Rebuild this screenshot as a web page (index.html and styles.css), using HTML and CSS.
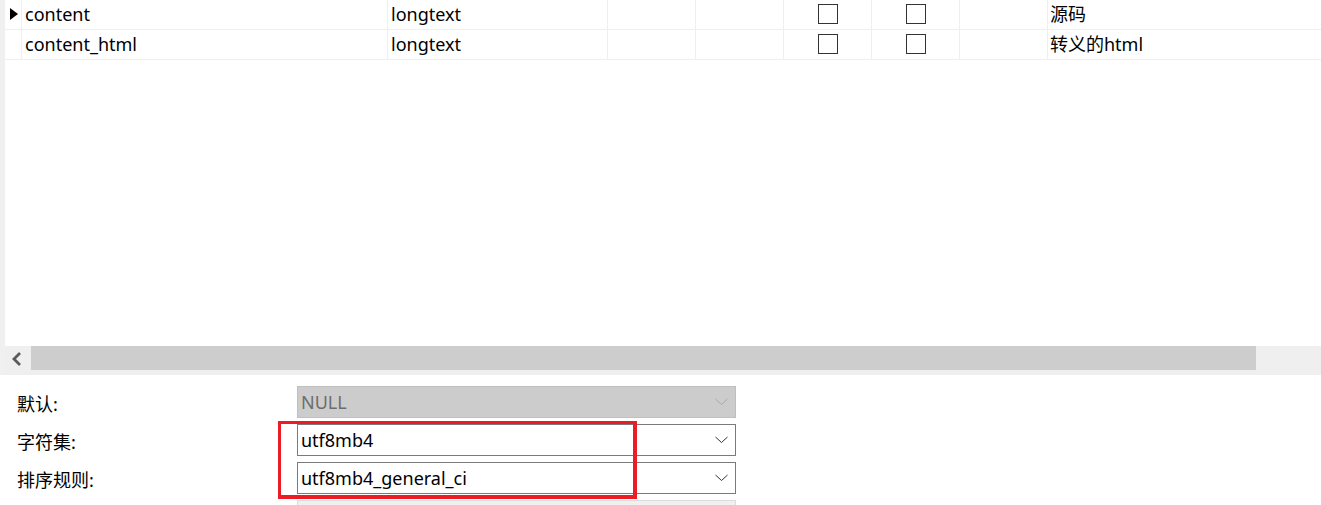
FILE: index.html
```html
<!DOCTYPE html>
<html>
<head>
<meta charset="utf-8">
<link rel="stylesheet" href="styles.css">
</head>
<body>
<div class="top">
  <div class="edge"></div>
  <div class="pane">
    <div class="table">
      <div class="row">
        <div class="cell ind"><span class="tri"></span></div>
        <div class="cell txt">content</div>
        <div class="cell txt">longtext</div>
        <div class="cell"></div>
        <div class="cell"></div>
        <div class="cell chk"><span class="box"></span></div>
        <div class="cell chk"><span class="box"></span></div>
        <div class="cell"></div>
        <div class="cell txt last">源码</div>
      </div>
      <div class="row">
        <div class="cell ind"></div>
        <div class="cell txt">content_html</div>
        <div class="cell txt">longtext</div>
        <div class="cell"></div>
        <div class="cell"></div>
        <div class="cell chk"><span class="box"></span></div>
        <div class="cell chk"><span class="box"></span></div>
        <div class="cell"></div>
        <div class="cell txt last">转义的html</div>
      </div>
    </div>
    <div class="hscroll">
      <div class="sbtn">
        <svg width="11" height="14" viewBox="0 0 11 14"><polyline points="9,1 3,7 9,13" fill="none" stroke="#5a5a5a" stroke-width="2.8"/></svg>
      </div>
      <div class="thumb"></div>
      <div class="track"></div>
    </div>
  </div>
</div>
<div class="form">
  <div class="label">默认:</div>
  <div class="combo disabled"><span class="val">NULL</span>
    <svg class="chev" width="13" height="8" viewBox="0 0 13 8"><polyline points="0.5,1 6.5,6.5 12.5,1" fill="none" stroke="#a8a8a8" stroke-width="1"/></svg></div>
  <div class="label">字符集:</div>
  <div class="combo"><span class="val">utf8mb4</span>
    <svg class="chev" width="13" height="8" viewBox="0 0 13 8"><polyline points="0.5,1 6.5,6.5 12.5,1" fill="none" stroke="#333" stroke-width="1"/></svg></div>
  <div class="label">排序规则:</div>
  <div class="combo"><span class="val">utf8mb4_general_ci</span>
    <svg class="chev" width="13" height="8" viewBox="0 0 13 8"><polyline points="0.5,1 6.5,6.5 12.5,1" fill="none" stroke="#333" stroke-width="1"/></svg></div>
  <div class="label"></div>
  <div class="combo faded"></div>
  <div class="highlight"></div>
</div>
</body>
</html>
```
FILE: styles.css
```css
html, body {
  margin: 0;
  padding: 0;
  background: #fff;
}
html {
  height: 505px;
  overflow: hidden;
}
body {
  width: 1321px;
  height: 505px;
  overflow: hidden;
  font-family: "Noto Sans", "Noto Sans CJK SC", sans-serif;
  font-size: 18px;
  color: #000;
}
.top {
  display: flex;
  height: 375px;
}
.edge {
  width: 5px;
  background: #f0f0f0;
}
.pane {
  flex: 1;
  display: flex;
  flex-direction: column;
  min-width: 0;
}
.table {
  flex: 1;
  background: #fff;
}
.row {
  display: grid;
  grid-template-columns: 17px 366px 220px 88px 88px 88px 88px 88px 1fr;
  height: 30px;
}
.cell {
  border-right: 1px solid #efefef;
  border-bottom: 1px solid #efefef;
  display: flex;
  align-items: center;
  overflow: hidden;
  white-space: nowrap;
  line-height: 29px;
}
.cell.last {
  border-right: 0;
}
.txt {
  padding-left: 3px;
}
.cell.last.txt {
  padding-left: 2px;
}
.tri {
  display: block;
  width: 0;
  height: 0;
  margin-left: 5px;
  margin-top: -2px;
  border-top: 6.5px solid transparent;
  border-bottom: 6.5px solid transparent;
  border-left: 8px solid #000;
}
.chk {
  justify-content: center;
}
.box {
  display: block;
  width: 18px;
  height: 18px;
  border: 1px solid #333;
  margin-left: 1px;
  margin-top: -1px;
}
.hscroll {
  height: 29px;
  display: flex;
  align-items: flex-start;
  background: #efefef;
}
.sbtn {
  width: 26px;
  height: 24px;
  display: flex;
  align-items: center;
  justify-content: center;
  box-sizing: border-box;
  padding-right: 4px;
}
.sbtn svg {
  display: block;
  margin-top: 1px;
}
.thumb {
  width: 1225px;
  height: 24px;
  background: #cdcdcd;
}
.track {
  flex: 1;
}
.form {
  position: relative;
  display: grid;
  grid-template-columns: 280px 439px;
  grid-auto-rows: 32px;
  row-gap: 6px;
  padding: 11px 0 0 17px;
  height: 130px;
  box-sizing: border-box;
  overflow: hidden;
}
.label {
  display: flex;
  align-items: center;
  padding-top: 2px;
}
.combo {
  box-sizing: border-box;
  border: 1px solid #7a7a7a;
  background: #fff;
  display: flex;
  align-items: center;
  padding-left: 3px;
  padding-right: 7px;
}
.combo .val {
  flex: 1;
}
.combo.disabled {
  background: #cccccc;
  border-color: #bfbfbf;
  color: #6d6d6d;
}
.combo.faded {
  background: #f0f0f0;
  border-color: #dcdcdc;
}
.chev {
  display: block;
}
.highlight {
  position: absolute;
  left: 278px;
  top: 46px;
  width: 359px;
  height: 78px;
  box-sizing: border-box;
  border: 3px solid #ec1c24;
  border-right-width: 4px;
  border-bottom-width: 4px;
}
```
